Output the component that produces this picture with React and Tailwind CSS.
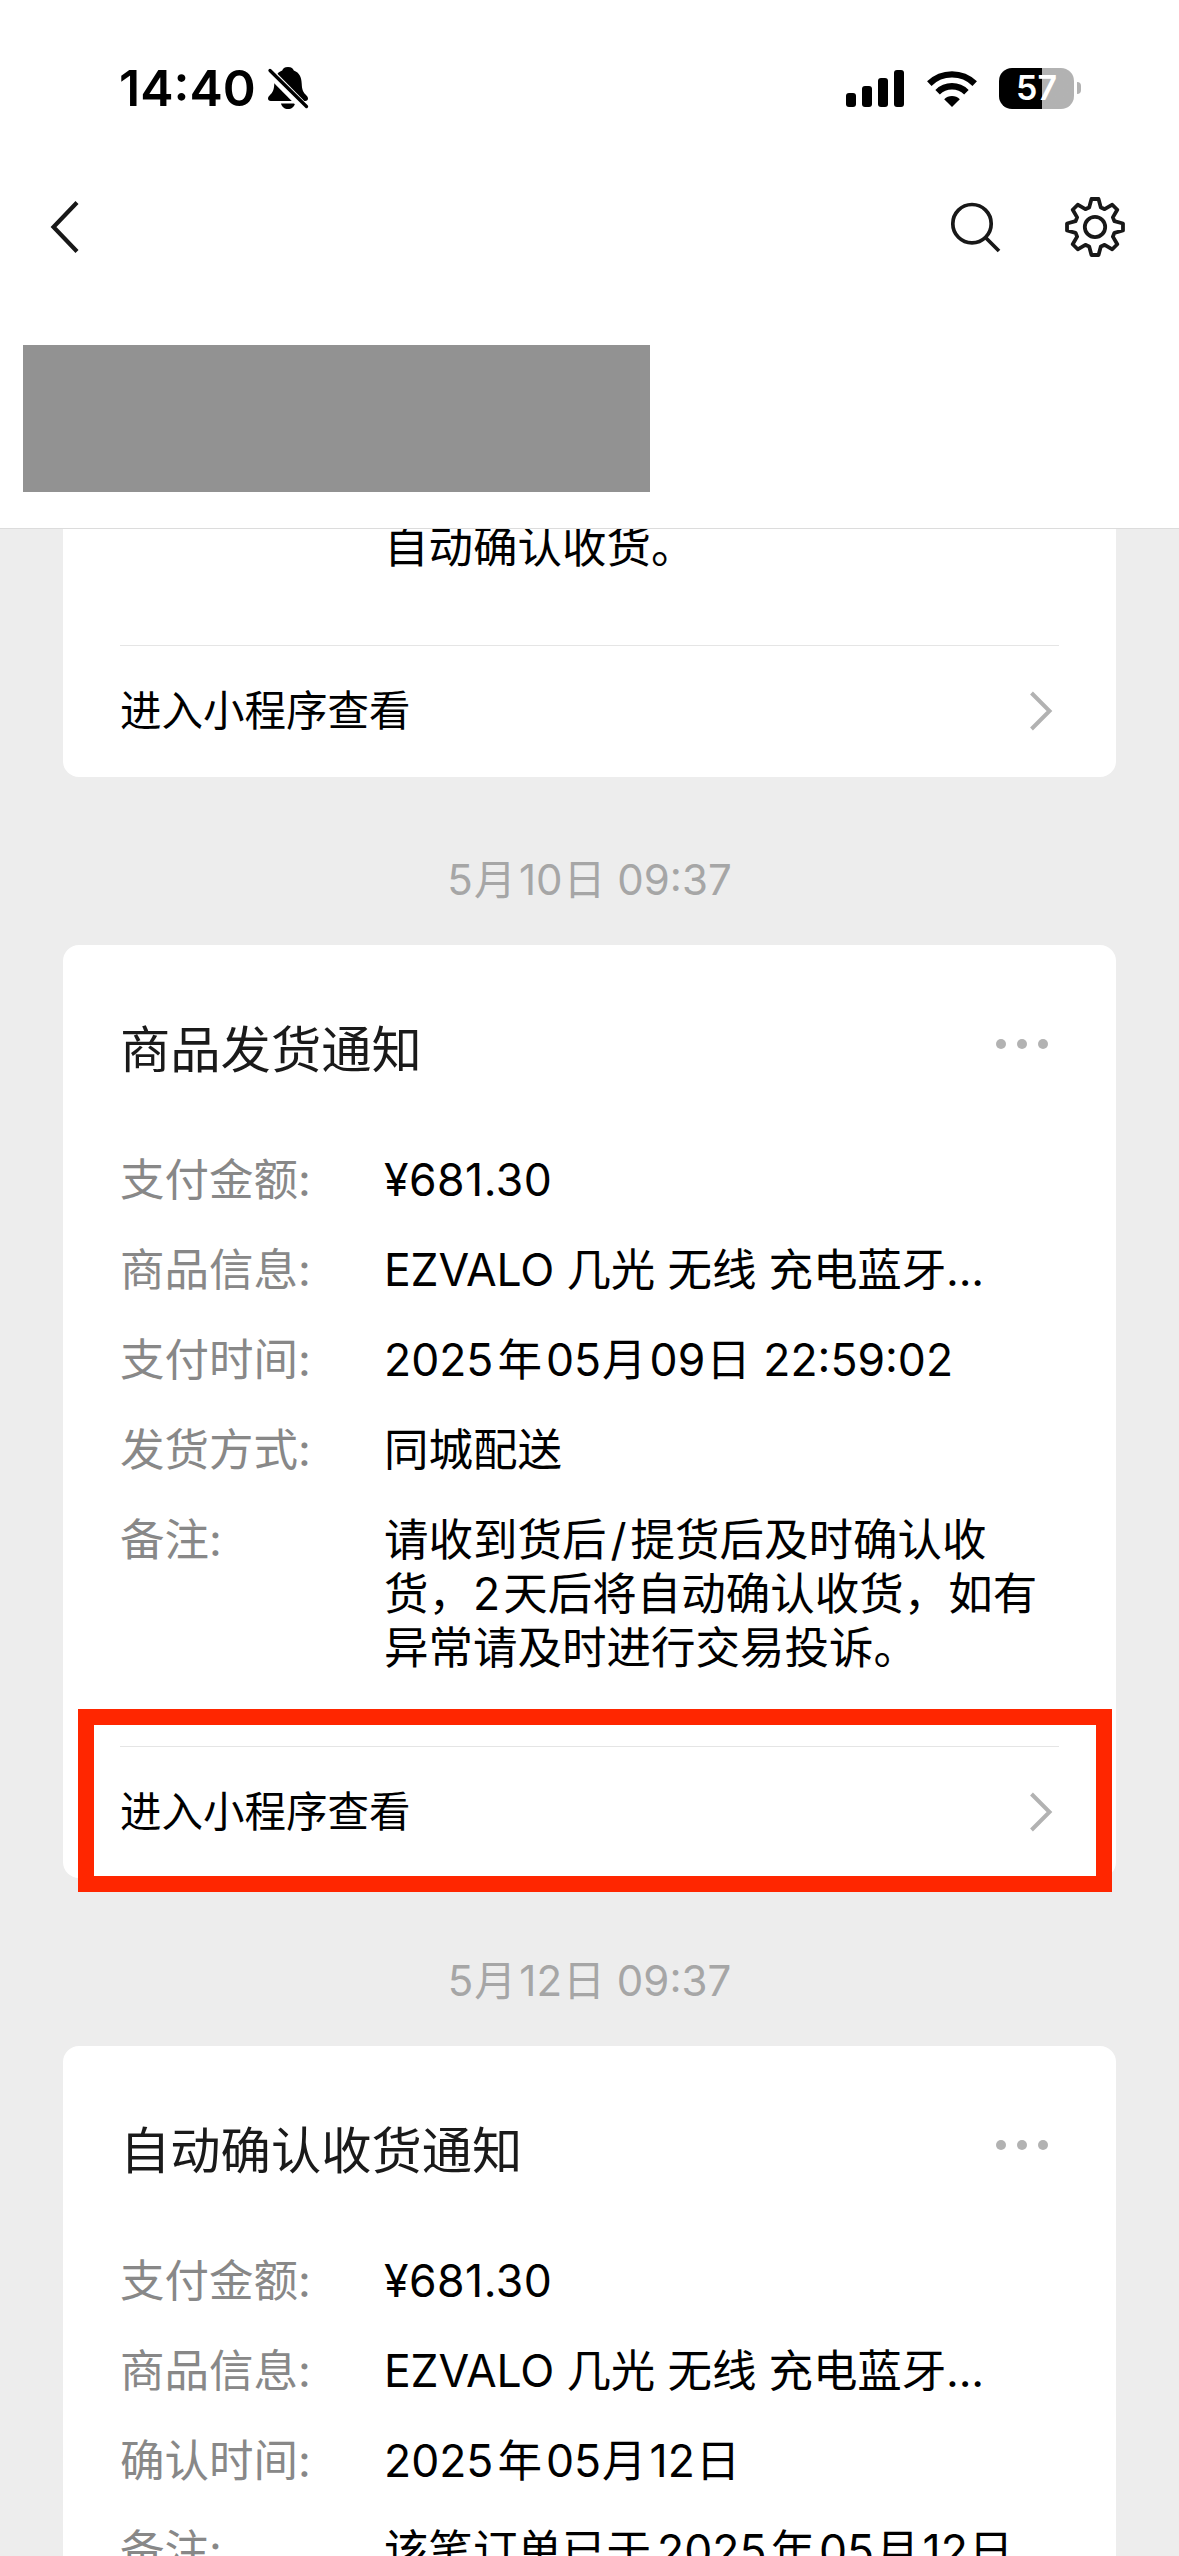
import React from "react";

const notices = [
  {
    id: 1,
    time: "5月10日 09:37",
    title: "商品发货通知",
    highlighted: true,
    rows: [
      { label: "支付金额:", value: "¥681.30", tracking: "tracking-[0.5px]" },
      {
        label: "商品信息:",
        value: "EZVALO 几光 无线 充电蓝牙...",
        tracking: "tracking-[-0.150px]",
      },
      { label: "支付时间:", value: "2025年05月09日 22:59:02" },
      { label: "发货方式:", value: "同城配送" },
      {
        label: "备注:",
        value:
          "请收到货后/提货后及时确认收\n货，2天后将自动确认收货，如有\n异常请及时进行交易投诉。",
      },
    ],
  },
  {
    id: 2,
    time: "5月12日 09:37",
    title: "自动确认收货通知",
    highlighted: false,
    rows: [
      { label: "支付金额:", value: "¥681.30", tracking: "tracking-[0.5px]" },
      {
        label: "商品信息:",
        value: "EZVALO 几光 无线 充电蓝牙...",
        tracking: "tracking-[-0.150px]",
      },
      { label: "确认时间:", value: "2025年05月12日" },
      { label: "备注:", value: "该笔订单已于2025年05月12日\n自动确认收货。" },
    ],
  },
];

// extra room where Chinese characters meet digits or a slash
const spacing = {
  年: "mx-[4px]",
  月: "ml-[1px] mr-[3px]",
  日: "ml-[1px]",
  于: "mr-[6px]",
  天: "ml-[3px]",
  "/": "mx-[4px]",
};

const SpacedText = ({ text }) =>
  text.split(/([年月日于天/])/).map((part, index) =>
    spacing[part] ? (
      <span key={index} className={spacing[part]}>
        {part}
      </span>
    ) : (
      part
    )
  );

// eight teeth around the center, one every 45 degrees
const gearPath = () => {
  const points = [];
  for (let i = 0; i < 8; i++) {
    const tooth = [
      [-16.7, 20.3],
      [-7.2, 28.2],
      [7.2, 28.2],
      [16.7, 20.3],
    ];
    tooth.forEach(([deg, r]) => {
      const a = ((i * 45 + deg) * Math.PI) / 180;
      points.push(
        `${(32 + r * Math.sin(a)).toFixed(2)} ${(32 - r * Math.cos(a)).toFixed(2)}`
      );
    });
  }
  return `M${points.join("L")}Z`;
};

const BellOff = () => (
  <svg className="w-[42px] h-[44px]" viewBox="0 0 42 44">
    <path
      d="M21 1c-3.600 0-5.200 1.700-5.800 3.500C9.500 6.600 7.500 11.500 7.300 17.500 7 24.500 5.500 26.500 3 29c-1.300 1.300-2 2.400-2 3.600C1 34.200 2 35 3.800 35h34.400c1.800 0 2.800-.8 2.800-2.400 0-1.200-.7-2.300-2-3.600-2.500-2.500-4-4.500-4.300-11.500-.2-6-2.200-10.900-7.900-13C26.200 2.700 24.600 1 21 1Z"
      fill="#000"
    />
    <path d="M14 37.500h14c-.8 3.500-3.500 5.500-7 5.500s-6.200-2-7-5.500Z" fill="#000" />
    <path d="M-1 2.500 39.500 43.500" stroke="#fff" strokeWidth="9" />
    <path
      d="M3 4.500 39.500 40.500"
      stroke="#000"
      strokeWidth="3.300"
      strokeLinecap="round"
    />
  </svg>
);

const Wifi = () => (
  <svg className="w-[50px] h-[37px]" viewBox="0 0 50 37">
    <g fill="none" stroke="#000" strokeWidth="6.400">
      <path d="M2.300 13.600a32.500 32.500 0 0 1 45.400 0" />
      <path d="M10.600 22.200a20.500 20.500 0 0 1 28.800 0" />
    </g>
    <path d="M25 37 17.200 29.200a11.200 11.200 0 0 1 15.600 0Z" fill="#000" />
  </svg>
);

const StatusBar = () => (
  <div className="flex items-center justify-between h-[176px] pl-[119px] pr-[98px]">
    <div className="flex items-center gap-[11px]">
      <span className="text-[50px] leading-[60px] font-semibold text-black">
        14:40
      </span>
      <BellOff />
    </div>
    <div className="flex items-center">
      <div className="flex items-end gap-[6px] h-[37px] mr-[23px]">
        <div className="w-[10px] h-[14px] rounded-[3px] bg-black"></div>
        <div className="w-[10px] h-[21px] rounded-[3px] bg-black"></div>
        <div className="w-[10px] h-[29px] rounded-[3px] bg-black"></div>
        <div className="w-[10px] h-[37px] rounded-[3px] bg-black"></div>
      </div>
      <Wifi />
      <div className="flex items-center justify-center ml-[22px] w-[75px] h-[41px] rounded-[13px] bg-linear-to-r from-black from-57% to-[#b2b2b2] to-57%">
        <span className="text-[34px] leading-[40px] font-semibold text-white">
          57
        </span>
      </div>
      <div className="ml-[3px] w-[4px] h-[12px] rounded-r-full bg-[#b2b2b2]"></div>
    </div>
  </div>
);

const NavBar = () => (
  <div className="flex items-center justify-between h-[102px] pl-[48px] pr-[52px]">
    <svg className="w-[34px] h-[56px]" viewBox="0 0 34 56">
      <path
        d="M29 3.500 5.500 28 29 52.500"
        fill="none"
        stroke="#181818"
        strokeWidth="4.200"
      />
    </svg>
    <div className="flex items-center gap-[61px]">
      <svg className="w-[54px] h-[54px]" viewBox="0 0 54 54">
        <g fill="none" stroke="#181818" strokeWidth="3.700">
          <circle cx="24" cy="23.700" r="19.200" />
          <path d="M37.500 37.500 51 51" />
        </g>
      </svg>
      <svg className="w-[64px] h-[64px]" viewBox="0 0 64 64">
        <g
          fill="none"
          stroke="#181818"
          strokeWidth="3.800"
          strokeLinejoin="round"
        >
          <path d={gearPath()} />
          <circle cx="32" cy="32" r="10.200" />
        </g>
      </svg>
    </div>
  </div>
);

const CardFooter = ({ highlighted }) => (
  <div className="relative px-[57px]">
    <div className="flex items-center justify-between h-[132px] pb-[2px] border-t border-[#e5e5e5]">
      <span className="text-[41.500px] leading-[54px] text-black">
        进入小程序查看
      </span>
      <svg className="w-[24px] h-[40px] mr-[6px]" viewBox="0 0 24 40">
        <path
          d="M2.500 2 20.500 20 2.500 38"
          fill="none"
          stroke="#b2b2b2"
          strokeWidth="4"
        />
      </svg>
    </div>
    {highlighted && (
      <div className="absolute -top-[37px] left-[15px] w-[1034px] h-[183px] border-[16px] border-[#ff2600]"></div>
    )}
  </div>
);

const Row = ({ label, value, tracking }) => (
  <div className="flex text-[44.500px] leading-[54px]">
    <span className="w-[264px] shrink-0 text-[#888888]">{label}</span>
    <span className={`whitespace-pre text-black ${tracking || ""}`}>
      <SpacedText text={value} />
    </span>
  </div>
);

const NoticeCard = ({ notice }) => (
  <div>
    <div className="flex items-center justify-center h-[168px] pt-[36px] text-[42px] text-[#a6a6a6]">
      <span className="whitespace-pre">
        <SpacedText text={notice.time} />
      </span>
    </div>
    <div className="bg-white rounded-[16px]">
      <div className="flex items-center justify-between pt-[75px] px-[57px]">
        <h3 className="text-[50.300px] leading-[60px] text-[#1a1a1a]">
          {notice.title}
        </h3>
        <div className="flex gap-[11px] mr-[11px] -mt-[12px]">
          <div className="size-[10px] rounded-full bg-[#b2b2b2]"></div>
          <div className="size-[10px] rounded-full bg-[#b2b2b2]"></div>
          <div className="size-[10px] rounded-full bg-[#b2b2b2]"></div>
        </div>
      </div>
      <div className="flex flex-col gap-[36px] pt-[73px] pb-[71px] px-[57px]">
        {notice.rows.map((row) => (
          <Row key={row.label} {...row} />
        ))}
      </div>
      <CardFooter highlighted={notice.highlighted} />
    </div>
  </div>
);

const App = () => {
  return (
    <div className="flex flex-col w-[1179px] h-[2556px] overflow-hidden bg-[#ededed] font-['Inter','Noto_Sans_CJK_SC',sans-serif]">
      {/* Header */}
      <div className="shrink-0 h-[529px] bg-white border-b border-[#dcdcdc]">
        <StatusBar />
        <NavBar />
        <div className="mt-[67px] ml-[23px] w-[627px] h-[147px] bg-[#929292]"></div>
      </div>

      {/* Notices */}
      <div className="flex-1 min-h-0 overflow-hidden px-[63px]">
        <div className="-mt-[9px] bg-white rounded-b-[16px]">
          <div className="pl-[321px] pb-[71px] text-[44.500px] leading-[54px] text-black">
            自动确认收货。
          </div>
          <CardFooter />
        </div>
        {notices.map((notice) => (
          <NoticeCard key={notice.id} notice={notice} />
        ))}
      </div>
    </div>
  );
};

export default App;
